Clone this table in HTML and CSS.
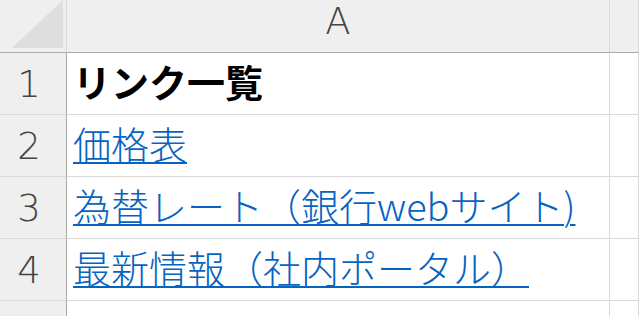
FILE: index.html
```html
<!DOCTYPE html>
<html lang="ja">
<head>
<meta charset="utf-8">
<link rel="stylesheet" href="styles.css">
</head>
<body>
<div class="sheet">
  <div class="corner"><div class="tri"></div></div>
  <div class="colhead">A</div>
  <div class="colhead"></div>

  <div class="rowhead">1</div>
  <div class="cell"><span class="title">リンク一覧</span></div>
  <div class="cell"></div>

  <div class="rowhead">2</div>
  <div class="cell"><a class="link" href="#">価格表</a></div>
  <div class="cell"></div>

  <div class="rowhead">3</div>
  <div class="cell"><a class="link" href="#">為替レート（銀行webサイト)</a></div>
  <div class="cell"></div>

  <div class="rowhead">4</div>
  <div class="cell"><a class="link" href="#">最新情報（社内ポータル）</a></div>
  <div class="cell"></div>

  <div class="rowhead last"></div>
  <div class="cell last"></div>
  <div class="cell last"></div>
</div>
</body>
</html>
```

FILE: styles.css
```css
html, body {
  margin: 0;
  padding: 0;
  background: #ffffff;
  overflow: hidden;
}

.sheet {
  display: grid;
  grid-template-columns: 67px 543px 1fr;
  grid-template-rows: 53px 62px 62px 62px 62px 1fr;
  width: 639px;
  height: 316px;
}

.sheet > div {
  box-sizing: border-box;
  border-right: 1px solid #dadada;
  border-bottom: 1px solid #dadada;
}

.corner {
  background: #efefef;
  border-bottom-color: #ababab !important;
  display: flex;
  justify-content: flex-end;
  align-items: flex-end;
  padding: 0 3px 4px 0;
}

.tri {
  width: 51px;
  height: 48px;
  background: #dedede;
  clip-path: polygon(100% 0, 100% 100%, 0 100%);
}

.colhead {
  background: #efefef;
  border-bottom-color: #ababab !important;
  display: flex;
  justify-content: center;
  align-items: center;
  padding-bottom: 8px;
  font-family: "DejaVu Sans", sans-serif;
  font-size: 37px;
  font-weight: 300;
  line-height: 38px;
  color: #444444;
}

.rowhead {
  background: #efefef;
  border-right-color: #ababab !important;
  display: flex;
  justify-content: center;
  align-items: flex-end;
  padding: 0 8px 10px 0;
  font-family: "DejaVu Sans", sans-serif;
  font-size: 37px;
  font-weight: 300;
  line-height: 38px;
  color: #444444;
}

.cell {
  display: flex;
  align-items: flex-end;
  padding: 0 0 14px 6px;
  font-family: "Noto Sans CJK JP", sans-serif;
  font-size: 38px;
  line-height: 38px;
  white-space: nowrap;
}

.last {
  border-bottom: none !important;
}

.title {
  font-weight: 700;
  color: #000000;
}

.link {
  font-weight: 300;
  color: #0563c1;
  text-decoration: underline;
  text-decoration-thickness: 2px;
  text-underline-offset: 3px;
}
```
